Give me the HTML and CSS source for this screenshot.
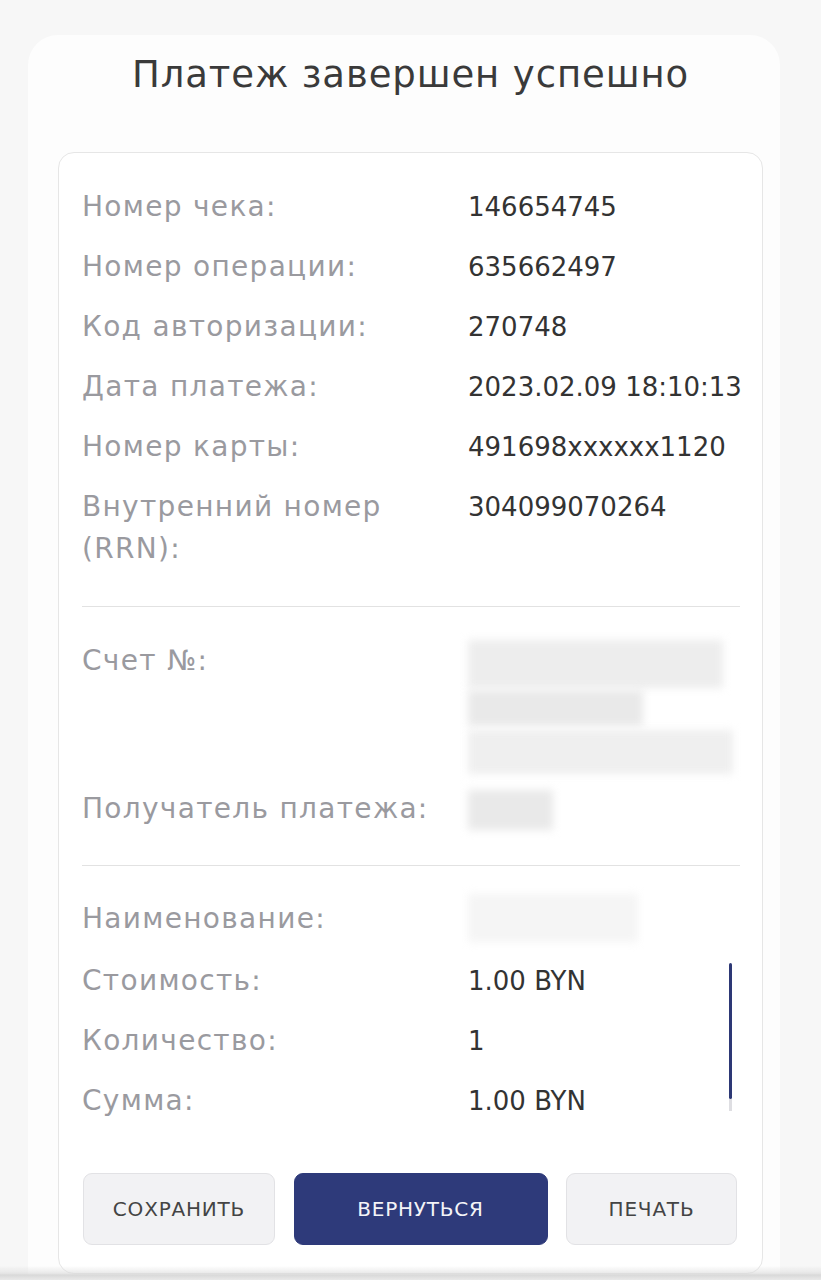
FILE: index.html
```html
<!DOCTYPE html>
<html lang="ru">
<head>
<meta charset="utf-8">
<title>Платеж завершен успешно</title>
<link rel="stylesheet" href="styles.css">
</head>
<body>
<div class="sheet">
  <h1 class="title">Платеж завершен успешно</h1>
  <div class="card">
    <div class="grid first">
      <div class="label">Номер чека:</div><div class="value">146654745</div>
      <div class="label">Номер операции:</div><div class="value">635662497</div>
      <div class="label">Код авторизации:</div><div class="value">270748</div>
      <div class="label">Дата платежа:</div><div class="value">2023.02.09 18:10:13</div>
      <div class="label">Номер карты:</div><div class="value">491698xxxxxx1120</div>
      <div class="label">Внутренний номер (RRN):</div><div class="value">304099070264</div>
    </div>
    <div class="divider"></div>
    <div class="grid second">
      <div class="label">Счет №:</div>
      <div class="value redacted-stack">
        <div class="redact r1"></div>
        <div class="redact r2"></div>
        <div class="redact r3"></div>
      </div>
      <div class="label">Получатель платежа:</div>
      <div class="value"><div class="redact r4"></div></div>
    </div>
    <div class="divider"></div>
    <div class="grid third">
      <div class="label">Наименование:</div><div class="value"><div class="redact r5"></div></div>
      <div class="label">Стоимость:</div><div class="value">1.00 BYN</div>
      <div class="label">Количество:</div><div class="value">1</div>
      <div class="label">Сумма:</div><div class="value">1.00 BYN</div>
      <div class="scrollbar"><div class="thumb"></div><div class="track"></div></div>
    </div>
    <div class="actions">
      <button class="btn btn-light save">СОХРАНИТЬ</button>
      <button class="btn btn-primary back">ВЕРНУТЬСЯ</button>
      <button class="btn btn-light print">ПЕЧАТЬ</button>
    </div>
  </div>
</div>
<div class="bottom-shade"></div>
</body>
</html>
```

FILE: styles.css
```css
* { box-sizing: border-box; }
html, body { margin: 0; padding: 0; }
body {
  background: #f7f7f7;
  font-family: "DejaVu Sans", "Open Sans", sans-serif;
  color: #333;
  min-height: 1280px;
  overflow: hidden;
}
.sheet {
  margin: 35px 41px 0 28px;
  background: #fdfdfd;
  border-radius: 30px 30px 0 0;
  padding-top: 17px;
  min-height: 1245px;
}
.title {
  margin: 0 17px 54px 30px;
  text-align: center;
  font-size: 37px;
  line-height: 46px;
  font-weight: normal;
  letter-spacing: 0.9px;
  color: #3a3a3a;
  white-space: nowrap;
}
.card {
  margin: 0 17px 0 30px;
  background: #fff;
  border: 1px solid #e6e6e6;
  border-radius: 16px;
  padding: 33px 22px 28px 23px;
}
.grid {
  display: grid;
  grid-template-columns: 386px 1fr;
  row-gap: 18px;
  line-height: 42px;
}
.third { position: relative; }
.label {
  color: #9a9a9f;
  font-size: 28px;
  letter-spacing: 1.3px;
}
.value {
  color: #333;
  font-size: 26px;
  letter-spacing: 0;
  white-space: nowrap;
}
.first .label:nth-last-child(2) { padding-right: 40px; }
.divider {
  height: 1px;
  background: #e2e2e2;
}
.first + .divider { margin: 36px 0 33px; }
.second + .divider { margin: 35px 0 32px; }
.redacted-stack { height: 130px; position: relative; }
.redact {
  background: #ebebeb;
  filter: blur(4px);
}
.r1 { width: 255px; height: 48px; margin-top: 0; background: #ededed; }
.r2 { width: 175px; height: 36px; margin-top: 2px; background: #e9e9e9; }
.r3 { width: 265px; height: 44px; margin-top: 4px; background: #efefef; }
.r4 { width: 85px; height: 40px; margin-top: 2px; background: #e9e9e9; }
.r5 { width: 170px; height: 48px; margin-top: -4px; background: #f5f5f5; }
.scrollbar {
  position: absolute;
  left: 647px;
  top: 65px;
  width: 3px;
}
.thumb { height: 136px; background: #2d3875; border-radius: 2px; }
.track { height: 12px; background: #dedee2; }
.actions {
  margin-top: 51px;
  display: flex;
  justify-content: space-between;
  padding: 0 3px 0 1px;
}
.btn {
  height: 72px;
  border-radius: 9px;
  font-family: "DejaVu Sans", "Open Sans", sans-serif;
  font-size: 20px;
  letter-spacing: 0.8px;
  cursor: pointer;
}
.btn-light {
  background: #f2f2f4;
  border: 1px solid #e2e2e5;
  color: #444;
}
.btn-primary {
  background: #2e3a7a;
  border: 1px solid #2e3a7a;
  color: #f4f4f8;
}
.save { width: 192px; }
.back { width: 254px; }
.print { width: 171px; }
.bottom-shade {
  position: fixed;
  left: 0; right: 0; bottom: 0;
  height: 14px;
  background: linear-gradient(to bottom, rgba(220,220,220,0) 0%, rgba(220,220,220,0.6) 50%, #d9d9d9 65%, #e9e9e9 100%);
  pointer-events: none;
}
```
